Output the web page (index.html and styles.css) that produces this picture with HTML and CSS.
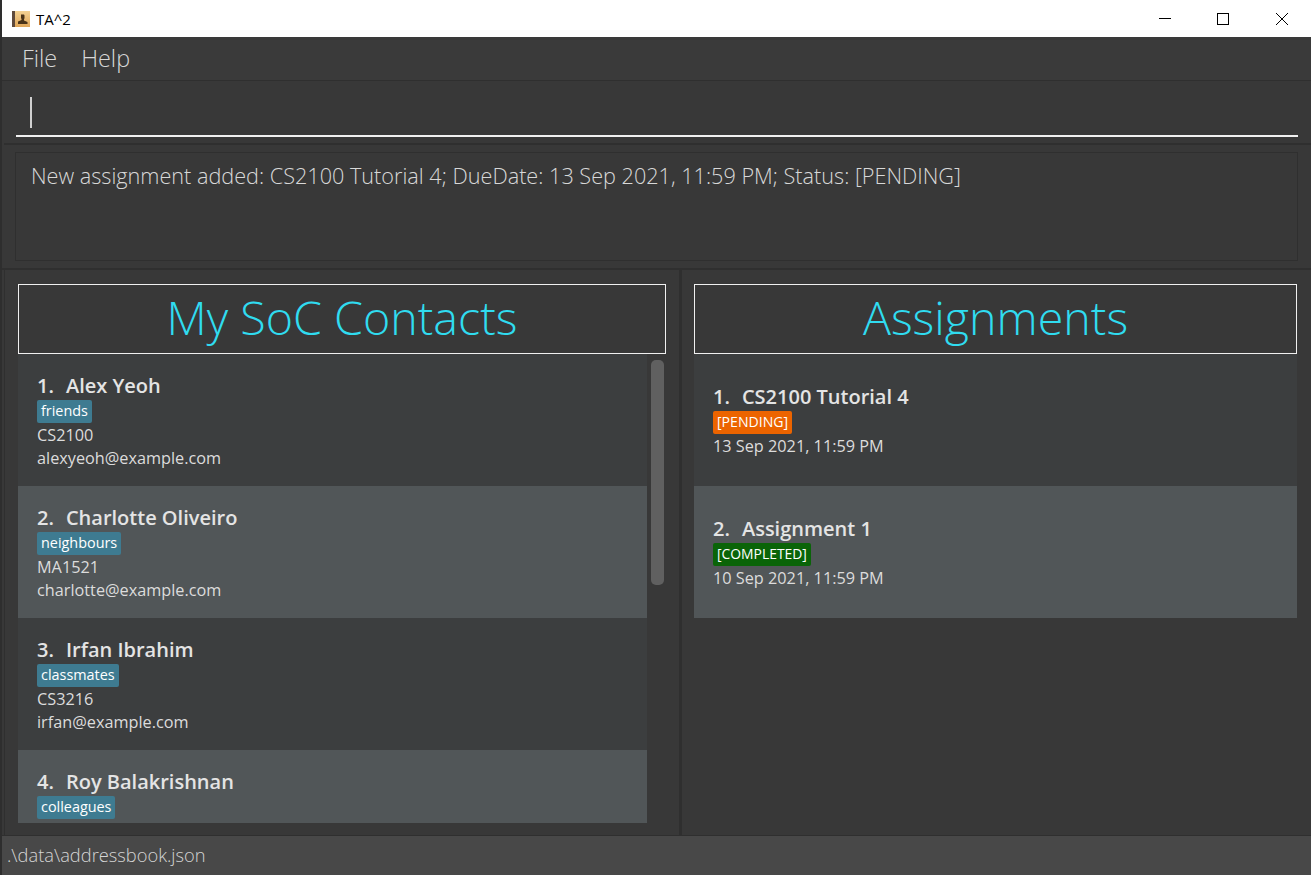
FILE: index.html
```html
<!DOCTYPE html>
<html lang="en">
<head>
  <meta charset="UTF-8" />
  <meta name="viewport" content="width=device-width, initial-scale=1.0" />
  <title>TA^2</title>
  <link rel="stylesheet" href="styles.css">
</head>
<body>
  <div id="window">
    <div id="title-bar">
      <svg class="app-icon" width="18" height="18" viewBox="0 0 18 18">
        <defs>
          <linearGradient id="cover" x1="0" y1="0" x2="0" y2="1">
            <stop offset="0" stop-color="#f3d193"/>
            <stop offset="1" stop-color="#e0a658"/>
          </linearGradient>
        </defs>
        <rect x="0" y="1" width="18" height="16" fill="url(#cover)"/>
        <rect x="0" y="1" width="3" height="16" fill="#5f4a3c"/>
        <path d="M9 4.5h3l.5 1v2.5l-.5 1.5v1l3.5 1.5V14H6v-2.500l3.500-1.500v-1L9 8V5.500z" fill="#4a3318"/>
      </svg>
      <span class="app-name">TA^2</span>
      <div class="window-buttons">
        <svg width="12" height="12" viewBox="0 0 12 12"><path d="M0 5.500h12" stroke="#000" fill="none"/></svg>
        <svg width="12" height="12" viewBox="0 0 12 12"><rect x="0.500" y="0.500" width="11" height="11" stroke="#000" fill="none"/></svg>
        <svg class="close-btn" width="12" height="12" viewBox="0 0 12 12"><path d="M0 0l12 12M12 0L0 12" stroke="#000" fill="none"/></svg>
      </div>
    </div>

    <div id="menu-bar">
      <span>File</span>
      <span>Help</span>
    </div>

    <div id="command-box">
      <div class="command-input"><span class="caret"></span></div>
    </div>

    <div id="result-box">
      <div class="result-text">New assignment added: CS2100 Tutorial 4; DueDate: 13 Sep 2021, 11:59 PM; Status: [PENDING]</div>
    </div>

    <div id="lists">
      <div class="panel contacts">
        <div class="panel-title">My SoC Contacts</div>
        <div class="list-wrap">
          <div class="list">
            <div class="card odd">
              <div class="card-name"><span class="index">1.</span>Alex Yeoh</div>
              <span class="tag">friends</span>
              <div class="card-line">CS2100</div>
              <div class="card-line">alexyeoh@example.com</div>
            </div>
            <div class="card even">
              <div class="card-name"><span class="index">2.</span>Charlotte Oliveiro</div>
              <span class="tag">neighbours</span>
              <div class="card-line">MA1521</div>
              <div class="card-line">charlotte@example.com</div>
            </div>
            <div class="card odd">
              <div class="card-name"><span class="index">3.</span>Irfan Ibrahim</div>
              <span class="tag">classmates</span>
              <div class="card-line">CS3216</div>
              <div class="card-line">irfan@example.com</div>
            </div>
            <div class="card even">
              <div class="card-name"><span class="index">4.</span>Roy Balakrishnan</div>
              <span class="tag">colleagues</span>
            </div>
          </div>
          <div class="scroll-track"><div class="scroll-thumb"></div></div>
        </div>
      </div>

      <div class="panel assignments">
        <div class="panel-title">Assignments</div>
        <div class="list">
          <div class="card odd assignment">
            <div class="card-name"><span class="index">1.</span>CS2100 Tutorial 4</div>
            <span class="tag pending">[PENDING]</span>
            <div class="card-line">13 Sep 2021, 11:59 PM</div>
          </div>
          <div class="card even assignment">
            <div class="card-name"><span class="index">2.</span>Assignment 1</div>
            <span class="tag completed">[COMPLETED]</span>
            <div class="card-line">10 Sep 2021, 11:59 PM</div>
          </div>
        </div>
      </div>
    </div>

    <div id="status-bar">.\data\addressbook.json</div>
  </div>
</body>
</html>
```

FILE: styles.css
```css
html, body {
  height: 100%;
}
body {
  margin: 0;
  background-color: #2e2e2e;
  font-family: "Open Sans", "Liberation Sans", sans-serif;
  overflow: hidden;
}
#window {
  margin-left: 2px;
  height: 875px;
  display: flex;
  flex-direction: column;
  background-color: #383838;
}
#title-bar {
  height: 37px;
  background: white;
  display: flex;
  align-items: center;
  padding-left: 10px;
  flex-shrink: 0;
}
.app-icon {
  margin-right: 6px;
}
.app-name {
  font-size: 15px;
  color: #000;
}
.window-buttons {
  margin-left: auto;
  display: flex;
  gap: 46px;
  padding-right: 23px;
  align-items: center;
}
.close-btn {
  margin-left: 1px;
}
#menu-bar {
  height: 44px;
  box-sizing: border-box;
  background-color: #3a3a3a;
  border-bottom: 1px solid #2f2f2f;
  display: flex;
  align-items: center;
  gap: 24px;
  padding: 0 0 2px 20px;
  color: #d8d8d8;
  font-size: 23.4px;
  font-weight: 300;
  flex-shrink: 0;
}
#command-box {
  height: 64px;
  margin-left: 2px;
  padding: 0 13px 0 12px;
  box-sizing: border-box;
  border-bottom: 2px solid #2f2f2f;
  flex-shrink: 0;
}
.command-input {
  height: 56px;
  box-sizing: border-box;
  border-bottom: 2px solid #f0f0f0;
  padding: 16px 0 0 14px;
}
.caret {
  display: block;
  width: 2px;
  height: 31px;
  background: #d0d0d0;
}
#result-box {
  height: 125px;
  box-sizing: border-box;
  padding: 7px 13px 7px 13px;
  border-bottom: 2px solid #2f2f2f;
  flex-shrink: 0;
}
.result-text {
  height: 100%;
  box-sizing: border-box;
  border: 1px solid #2f2f2f;
  padding: 9px 15px;
  color: #d8d8d8;
  font-size: 21.65px;
  font-weight: 300;
  line-height: 28px;
  white-space: nowrap;
}
#lists {
  flex: 1;
  display: flex;
  margin-left: 2px;
  min-height: 0;
}
.panel {
  box-sizing: border-box;
  padding: 14px 14px 0 12px;
  display: flex;
  flex-direction: column;
  min-height: 0;
}
.contacts {
  width: 678px;
  border-right: 3px solid #2f2f2f;
  border-left: 1px solid #2f2f2f;
  padding-left: 13px;
  padding-right: 13px;
}
.assignments {
  flex: 1;
}
.panel-title {
  height: 70px;
  box-sizing: border-box;
  border: 1px solid #f0f0f0;
  color: #30dcf0;
  font-size: 46.6px;
  font-weight: 300;
  line-height: 64px;
  text-align: center;
  flex-shrink: 0;
}
.list-wrap {
  flex: 1;
  display: flex;
  min-height: 0;
  margin-bottom: 12px;
  overflow: hidden;
}
.list-wrap .list {
  flex: 1;
}
.scroll-track {
  width: 19px;
  flex-shrink: 0;
  padding: 6px 2px 0 4px;
  box-sizing: border-box;
}
.scroll-thumb {
  width: 13px;
  height: 225px;
  border-radius: 5px;
  background: #606060;
}
.card {
  height: 132px;
  box-sizing: border-box;
  padding: 18px 19px 0;
  color: #dcdcdc;
}
.assignment {
  padding-top: 29px;
}
.odd {
  background-color: #3c3e3f;
}
.even {
  background-color: #515658;
}
.card-name {
  font-size: 20px;
  font-weight: 600;
  line-height: 28px;
  color: #e4e4e4;
  white-space: nowrap;
}
.index {
  margin-right: 12px;
}
.card-line {
  font-size: 16.25px;
  line-height: 23px;
  white-space: nowrap;
}
.tag {
  display: inline-block;
  height: 23px;
  line-height: 22px;
  padding: 0 4px;
  margin-bottom: 1px;
  border-radius: 2px;
  background-color: #3e7b91;
  color: white;
  font-size: 14.4px;
  vertical-align: top;
}
.pending {
  background-color: #ec6400;
  font-size: 14.1px;
}
.completed {
  background-color: #0a6408;
  font-size: 13.9px;
}
#status-bar {
  height: 40px;
  background-color: #484848;
  border-top: 1px solid #2f2f2f;
  box-sizing: border-box;
  padding-left: 5px;
  color: #d4d4d4;
  font-size: 18.3px;
  font-weight: 300;
  line-height: 38px;
  flex-shrink: 0;
}
```
